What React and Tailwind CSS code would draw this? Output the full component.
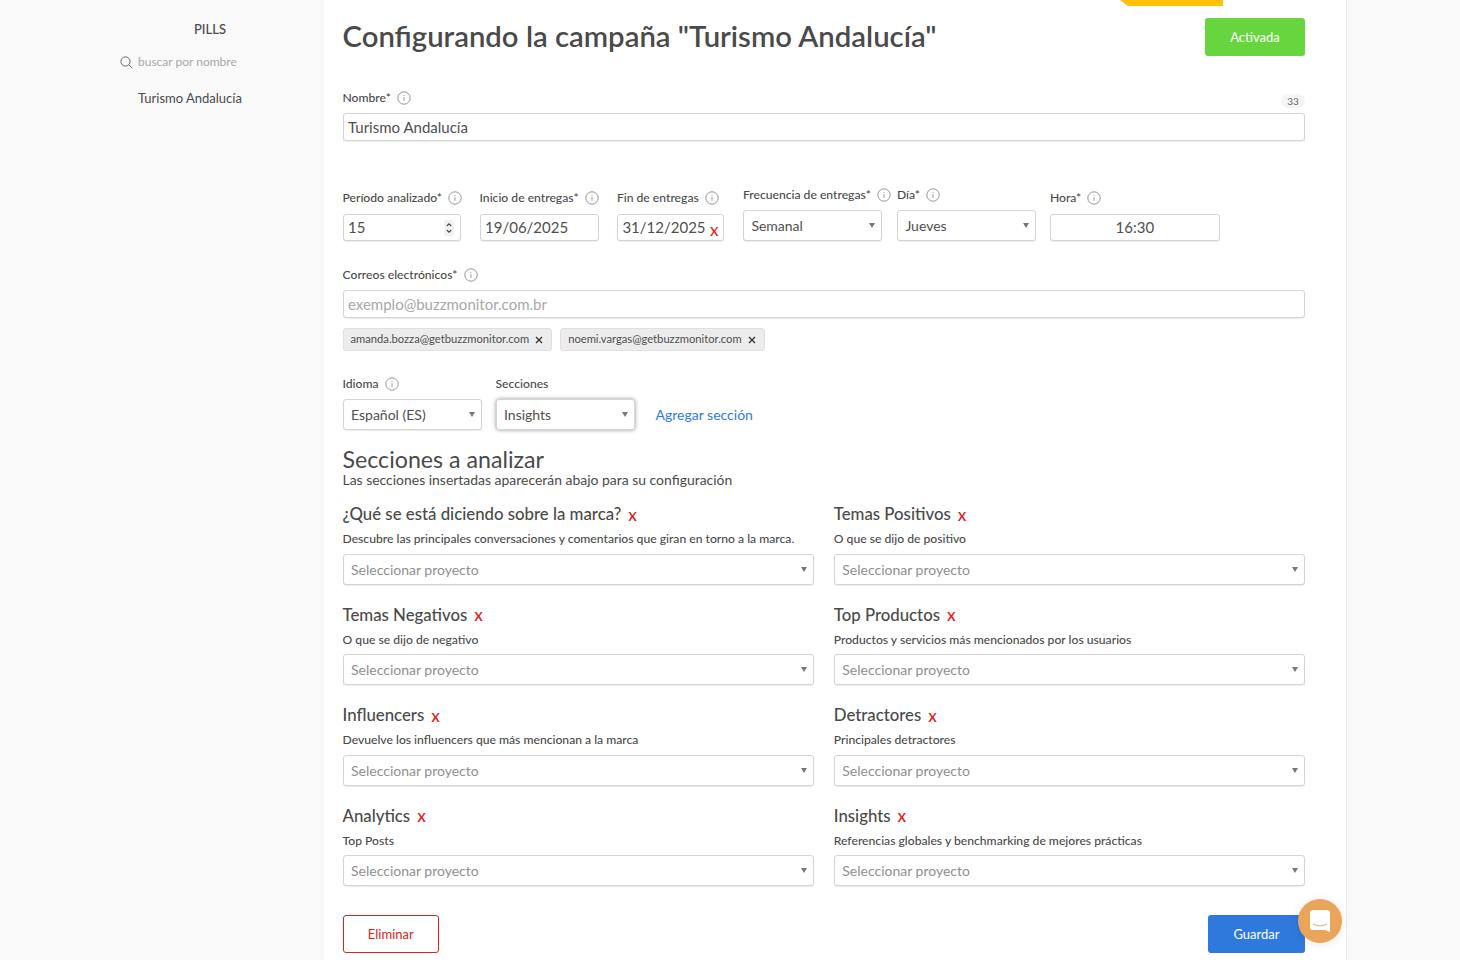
const lato = "font-['Lato','Liberation_Sans',sans-serif]";

const InfoIcon = () => (
  <svg width="14" height="14" viewBox="0 0 14 14" fill="none" className="shrink-0">
    <circle cx="7" cy="7" r="6.2" stroke="#8a8a8a" strokeWidth="0.9" />
    <path d="M7 6.2v3.6M7 4.1v.9" stroke="#8a8a8a" strokeWidth="0.9" />
  </svg>
);

const Label = ({ text, info = true }) => (
  <div className="flex items-center gap-[6px] h-[18px] pb-[2px] whitespace-nowrap text-[12.15px] font-medium text-[#4a4a4a]">
    <span>{text}</span>
    {info && <InfoIcon />}
  </div>
);

const Caret = () => <span className="w-0 h-0 border-x-[3px] border-x-transparent border-t-[5px] border-t-[#777] shrink-0" />;

const boxClass = "bg-white border border-[#d4d4d4] rounded-[3px] shadow-[0_1px_1px_rgba(0,0,0,0.08)]";

const Select = ({ value, placeholder, className = "h-[31px]" }) => (
  <div className={`${boxClass} flex items-center justify-between pl-[7.5px] pr-[6px] text-[14px] ${placeholder ? "text-[#8f8f8f]" : "text-[#4f4f4f]"} ${className}`}>
    <span>{value}</span>
    <Caret />
  </div>
);

const Input = ({ children, className = "h-[28px]" }) => (
  <div className={`${boxClass} flex items-center px-[4.5px] text-[15px] text-[#4f4f4f] ${className}`}>{children}</div>
);

const RedX = ({ className = "" }) => <span className={`text-[#e02020] text-[17px] leading-none ${className}`}>x</span>;

const Chip = ({ email }) => (
  <div className="h-[23px] flex items-center gap-[6px] pl-[7px] pr-2 bg-[#ececec] border border-[#e0e0e0] rounded-[3px] text-[11.2px] text-[#4f4f4f]">
    <span>{email}</span>
    <svg width="8" height="8" viewBox="0 0 8 8"><path d="M1 1l6 6M7 1l-6 6" stroke="#333" strokeWidth="1.3" /></svg>
  </div>
);

const sections = [
  ["¿Qué se está diciendo sobre la marca?", "Descubre las principales conversaciones y comentarios que giran en torno a la marca."],
  ["Temas Positivos", "O que se dijo de positivo"],
  ["Temas Negativos", "O que se dijo de negativo"],
  ["Top Productos", "Productos y servicios más mencionados por los usuarios"],
  ["Influencers", "Devuelve los influencers que más mencionan a la marca"],
  ["Detractores", "Principales detractores"],
  ["Analytics", "Top Posts"],
  ["Insights", "Referencias globales y benchmarking de mejores prácticas"],
];

const Section = ({ title, desc }) => (
  <div>
    <div className="flex items-center gap-[7px] h-[24px] text-[16.8px] font-medium text-[#4a4a4a]">
      <span>{title}</span>
      <RedX className="mt-[1px]" />
    </div>
    <p className="mt-[4.3px] h-[18px] leading-[18px] whitespace-nowrap text-[12.15px] font-medium text-[#4a4a4a]">{desc}</p>
    <Select value="Seleccionar proyecto" placeholder className="h-[31px] mt-[5.7px]" />
  </div>
);

export default function App() {
  return (
    <div className={`${lato} relative flex h-[960px] overflow-hidden bg-[#f9f9f9]`}>
      {/* sidebar */}
      <aside className="w-[324px] shrink-0 pt-[20px] pl-[120px]">
        <div className="text-center w-[180px] text-[13px] font-medium text-[#4a4a4a] leading-[18px]">PILLS</div>
        <div className="flex items-center gap-[5px] mt-[15px] h-[18px] text-[12px] text-[#a8a8a8]">
          <svg width="13" height="13" viewBox="0 0 13 13" fill="none">
            <circle cx="5.5" cy="5.5" r="4.6" stroke="#666" />
            <path d="M9 9l3.4 3.4" stroke="#666" />
          </svg>
          <span>buscar por nombre</span>
        </div>
        <div className="mt-[18px] pl-[18px] text-[13px] text-[#4a4a4a] leading-[18px]">Turismo Andalucía</div>
      </aside>

      {/* main panel */}
      <main className="relative w-[1023px] shrink-0 bg-white border-r border-[#ececec] pl-[18.5px] pr-[41px]">
        <div className="absolute top-0 left-[796px] w-[103px] h-[6px] bg-[#ffc107] [clip-path:polygon(0_0,100%_0,100%_100%,8px_100%)]" />

        <div className="flex items-start justify-between pt-[18px]">
          <h1 className="text-[29.3px] font-semibold text-[#4a4a4a] leading-[38px] -mt-[1px]">Configurando la campaña "Turismo Andalucía"</h1>
          <button className="w-[100px] h-[38px] pt-[1px] bg-[#66d53e] rounded-[3px] text-white text-[13px]">Activada</button>
        </div>

        {/* nombre */}
        <div className="flex items-end justify-between mt-[34px]">
          <Label text="Nombre*" />
          <span className="w-[24px] h-[14px] rounded-full bg-[#f5f5f5] text-[10px] leading-[14px] text-center text-[#666]">33</span>
        </div>
        <Input className="h-[28px] mt-[5px]">Turismo Andalucía</Input>

        {/* entregas */}
        <div className="flex items-end mt-[46px]">
          <div className="w-[137px]">
            <Label text="Período analizado*" />
            <Input className="h-[27px] w-[118.4px] mt-[6px] justify-between">
              <span>15</span>
              <svg width="10" height="16" viewBox="0 0 10 16" fill="none" className="mr-[1px]">
                <rect width="10" height="16" rx="3" fill="#f1f1f1" />
                <path d="M2.8 6L5 3.8 7.2 6M2.8 10L5 12.2 7.2 10" stroke="#444" strokeWidth="1.1" />
              </svg>
            </Input>
          </div>
          <div className="w-[137.4px]">
            <Label text="Inicio de entregas*" />
            <Input className="h-[27px] w-[119px] mt-[6px]">19/06/2025</Input>
          </div>
          <div className="w-[126px]">
            <Label text="Fin de entregas" />
            <Input className="h-[27px] w-[107px] mt-[6px] justify-between">
              <span>31/12/2025</span>
              <RedX className="mt-[3px]" />
            </Input>
          </div>
          <div className="w-[154px]">
            <Label text="Frecuencia de entregas*" />
            <Select value="Semanal" className="w-[139px] h-[31px] mt-[5px]" />
          </div>
          <div className="w-[153px]">
            <Label text="Día*" />
            <Select value="Jueves" className="w-[139px] h-[31px] mt-[5px]" />
          </div>
          <div className="w-[170px]">
            <Label text="Hora*" />
            <Input className="h-[27px] w-[170px] mt-[6px] justify-center">16:30</Input>
          </div>
        </div>

        {/* correos */}
        <div className="mt-[26px]">
          <Label text="Correos electrónicos*" />
        </div>
        <Input className="h-[28px] mt-[5px] !text-[#a8a8a8]">exemplo@buzzmonitor.com.br</Input>
        <div className="flex gap-2 mt-[10px]">
          <Chip email="amanda.bozza@getbuzzmonitor.com" />
          <Chip email="noemi.vargas@getbuzzmonitor.com" />
        </div>

        {/* idioma y secciones */}
        <div className="flex items-end mt-[25px]">
          <div className="w-[153px]">
            <Label text="Idioma" />
            <Select value="Español (ES)" className="w-[139px] h-[31px] mt-[5px]" />
          </div>
          <div className="w-[139px]">
            <Label text="Secciones" info={false} />
            <Select value="Insights" className="w-[139px] h-[31px] mt-[5px] !shadow-[0_0_4px_rgba(0,0,0,0.4)]" />
          </div>
          <span className="ml-[21px] h-[31px] leading-[31px] text-[14px] text-[#2f7ae5]">Agregar sección</span>
        </div>

        <h2 className="mt-[15px] text-[23.2px] leading-[28px] text-[#4a4a4a]">Secciones a analizar</h2>
        <p className="text-[13.95px] leading-[18px] text-[#4a4a4a] -mt-[2px]">Las secciones insertadas aparecerán abajo para su configuración</p>

        <div className="grid grid-cols-2 gap-x-[20px] gap-y-[17.5px] mt-[12.9px]">
          {sections.map(([title, desc]) => (
            <Section key={title} title={title} desc={desc} />
          ))}
        </div>

        <div className="flex justify-between mt-[28.6px]">
          <button className="w-[96.5px] h-[38px] pt-[1px] bg-white border border-[#e02020] rounded-[3px] text-[#e02020] text-[13px]">Eliminar</button>
          <button className="w-[97px] h-[38px] pt-[1px] bg-[#2f78dc] rounded-[3px] text-white text-[13px]">Guardar</button>
        </div>
      </main>

      {/* chat bubble */}
      <div className="absolute left-[1298px] top-[899px] w-[44px] h-[44px] rounded-full bg-[#eba55b] flex items-center justify-center shadow-[0_1px_10px_rgba(0,0,0,0.1)]">
        <svg width="20" height="22" viewBox="0 0 20 22">
          <path d="M3 0h14a3 3 0 013 3v19l-5-2H3a3 3 0 01-3-3V3a3 3 0 013-3z" fill="#fff" />
          <path d="M3 14c4 2.4 10 2.4 14 0" stroke="#eba55b" strokeWidth="1" fill="none" />
        </svg>
      </div>
    </div>
  );
}
